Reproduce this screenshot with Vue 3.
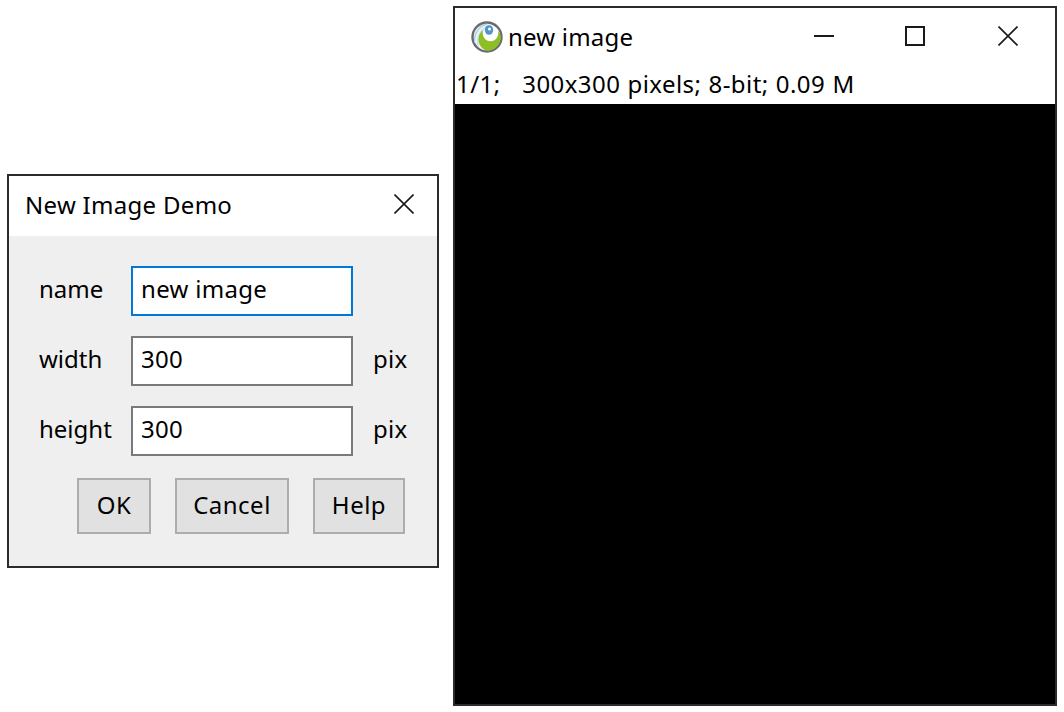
<script setup>
const rows = [
  { label: 'name', value: 'new image', unit: '', focused: true },
  { label: 'width', value: '300', unit: 'pix', focused: false },
  { label: 'height', value: '300', unit: 'pix', focused: false },
]
const buttons = [
  { text: 'OK', width: 74 },
  { text: 'Cancel', width: 114 },
  { text: 'Help', width: 92 },
]
const statusText = '1/1;   300x300 pixels; 8-bit; 0.09 M'
</script>

<template>
  <div class="desktop">
    <section class="dialog">
      <header class="dialog-title">
        <span class="dialog-name">New Image Demo</span>
        <svg class="glyph dialog-close" width="20" height="20" viewBox="0 0 20 20"><path d="M0.5 0.5 19.5 19.5M19.5 0.5 0.5 19.5" /></svg>
      </header>
      <div class="dialog-body">
        <div class="form">
          <template v-for="row in rows" :key="row.label">
            <label class="label">{{ row.label }}</label>
            <input class="field" :class="{ focused: row.focused }" :value="row.value" readonly />
            <span class="unit">{{ row.unit }}</span>
          </template>
        </div>
        <div class="actions">
          <button v-for="b in buttons" :key="b.text" class="btn" :style="{ width: b.width + 'px' }">{{ b.text }}</button>
        </div>
      </div>
    </section>

    <section class="image-window">
      <header class="image-title">
        <div class="image-name">
          <svg class="app-icon" width="34" height="32" viewBox="0 0 34 32">
            <defs><clipPath id="inner"><circle cx="17" cy="16" r="13.8" /></clipPath></defs>
            <circle cx="17" cy="16" r="14.5" fill="#eef2f3" stroke="#6a6a6a" stroke-width="2.4" />
            <g clip-path="url(#inner)">
              <path d="M4.5 22C4 12 9 5 17 3" fill="none" stroke="#a9d3ea" stroke-width="1.4" />
              <path d="M8 25C7 15 11 8 19 5" fill="none" stroke="#bfe0f0" stroke-width="1.4" />
              <ellipse cx="20" cy="18.5" rx="11.5" ry="11.5" fill="#8dbf25" />
              <circle cx="20.5" cy="12.5" r="7.8" fill="#fff" />
              <ellipse cx="19" cy="9" rx="4.2" ry="4.8" fill="#4f97c9" />
              <circle cx="19.5" cy="8" r="1.5" fill="#fff" />
            </g>
          </svg>
          <span>new image</span>
        </div>
        <svg class="glyph min" width="20" height="2" viewBox="0 0 20 2"><path d="M0 1H20" stroke-width="2" /></svg>
        <svg class="glyph max" width="20" height="20" viewBox="0 0 20 20"><path d="M1 1H19V19H1Z" stroke-width="2" /></svg>
        <svg class="glyph close" width="20" height="20" viewBox="0 0 20 20"><path d="M0.5 0.5 19.5 19.5M19.5 0.5 0.5 19.5" /></svg>
      </header>
      <div class="status">{{ statusText }}</div>
      <div class="canvas"></div>
    </section>
  </div>
</template>

<style>
html, body { margin: 0; background: #fff; }
</style>

<style scoped>
.desktop {
  width: 1064px;
  height: 712px;
  box-sizing: border-box;
  padding: 6px 0 0 7px;
  display: flex;
  align-items: flex-start;
  gap: 14px;
  overflow: hidden;
  background: #fff;
  font-family: "Noto Sans", "Open Sans", sans-serif;
  font-size: 24px;
  color: #000;
}
.glyph { fill: none; stroke: #1a1a1a; stroke-width: 1.6; flex: none; display: block; }

.dialog {
  width: 432px;
  height: 394px;
  margin-top: 168px;
  box-sizing: border-box;
  border: 2px solid #2b2b2b;
  display: flex;
  flex-direction: column;
}
.dialog-title {
  height: 60px;
  flex: none;
  box-sizing: border-box;
  padding: 0 23px 0 16px;
  display: flex;
  align-items: center;
  justify-content: space-between;
  background: #fff;
}
.dialog-name {
  padding-bottom: 4px;
  letter-spacing: 0.3px;
}
.dialog-close { margin-bottom: 4px; }
.dialog-body {
  flex: 1;
  background: #efefef;
  padding: 30px 32px 0 30px;
}
.form {
  display: grid;
  grid-template-columns: 92px 222px auto;
  grid-auto-rows: 50px;
  row-gap: 20px;
  align-items: center;
}
.label { padding-bottom: 5px; }
.field {
  width: 222px;
  height: 50px;
  box-sizing: border-box;
  border: 2px solid #7a7a7a;
  border-radius: 0;
  outline: none;
  background: #fff;
  padding: 0 8px 5px;
  margin: 0;
  font: inherit;
  letter-spacing: 0.3px;
  color: #000;
}
.field.focused { border-color: #0078d7; }
.unit {
  margin-left: 20px;
  padding-bottom: 5px;
  letter-spacing: 0.3px;
}
.actions {
  display: flex;
  justify-content: flex-end;
  gap: 24px;
  margin-top: 22px;
}
.btn {
  height: 56px;
  box-sizing: border-box;
  border: 2px solid #adadad;
  border-radius: 0;
  background: #e1e1e1;
  padding: 0 0 4px;
  font: inherit;
  letter-spacing: 0.5px;
  color: #000;
}

.image-window {
  width: 604px;
  height: 700px;
  box-sizing: border-box;
  border: 2px solid #2b2b2b;
  display: flex;
  flex-direction: column;
  background: #fff;
}
.image-title {
  height: 56px;
  flex: none;
  display: flex;
  align-items: center;
  box-sizing: border-box;
  padding: 0 37px 0 15px;
}
.image-name {
  display: flex;
  align-items: center;
  gap: 4px;
  flex: 1;
  letter-spacing: 0.2px;
}
.app-icon { flex: none; margin-top: 2px; }
.min { margin-right: 71px; }
.max { margin-right: 73px; }
.status {
  height: 40px;
  flex: none;
  padding-left: 1px;
  line-height: 40px;
  white-space: pre;
  letter-spacing: 0.42px;
  word-spacing: 0.6px;
}
.canvas { flex: 1; background: #000; }
</style>
